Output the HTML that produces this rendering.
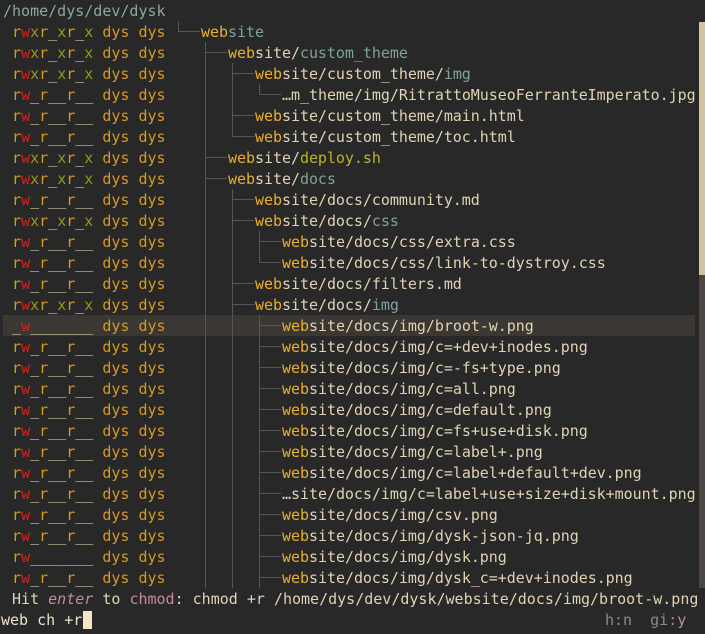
<!DOCTYPE html>
<html><head><meta charset="utf-8"><style>
html,body{margin:0;padding:0;background:#282828;width:705px;height:634px;overflow:hidden}
body{font-family:"DejaVu Sans Mono","Liberation Mono",monospace;font-size:15px;color:#e0d2b4;position:relative}
.row{position:absolute;left:0;height:21px;line-height:21px;white-space:pre;width:705px}
.t{position:absolute;left:3px;top:1px}
.nm{position:absolute;top:1px;letter-spacing:-0.04px}
.r{color:#d79921}.w{color:#cc241d}.x{color:#98971a}.u{color:#d6c9a8}
.o{color:#d79921}.m{color:#e8b030}.d{color:#7fa39b}.g{color:#b7b72a}
.sel{background:#3b3732}
.tr{position:absolute;top:0;width:27px;height:21px}
.tr.v::before,.tr.t::before,.tr.l::before{content:"";position:absolute;left:4px;width:1px;background:#55555c;top:0}
.tr.v::before,.tr.t::before{height:21px}
.tr.l::before{height:11px}
.tr.t::after,.tr.l::after{content:"";position:absolute;left:4px;top:10px;height:1px;width:22px;background:#55555c}
.pk{color:#c38aa0}.gr{color:#908a80}
</style></head><body>
<div class="row" style="top:0"><span class="t" style="color:#8fa6a0">/home/dys/dev/dysk</span></div>
<div id="rows"></div>
<div style="position:absolute;left:699px;top:22px;width:6px;height:253px;background:#d3c3a0"></div>
<div style="position:absolute;left:699px;top:275px;width:6px;height:313px;background:#4c4542"></div>
<div class="row" style="top:588px"><span class="t"> Hit <i class="pk">enter</i> to <span class="pk">chmod</span>: chmod +r /home/dys/dev/dysk/website/docs/img/broot-w.png</span></div>
<div class="row" style="top:609px"><span style="position:absolute;left:1px;top:1px;color:#ece2cc">web ch +r</span><span style="position:absolute;left:83px;top:2px;width:9px;height:18px;background:#f3e6c2"></span><span style="position:absolute;left:605px;top:1px" class="gr">h:n  gi:<span class="pk">y</span></span></div>
<script>
const P={a:['r','w','x','r','u','x','r','u','x'],f:['r','w','u','r','u','u','r','u','u'],s:['u','w','u','u','u','u','u','u','u'],p:['r','w','u','u','u','u','u','u','u']};
const rows=[
['a','l','<span class="m">web</span><span class="d">site</span>'],
['a','et','<span class="m">web</span>site/<span class="d">custom_theme</span>'],
['a','evt','<span class="m">web</span>site/custom_theme/<span class="d">img</span>'],
['f','evvl','…m_theme/img/RitrattoMuseoFerranteImperato.jpg'],
['f','evt','<span class="m">web</span>site/custom_theme/main.html'],
['f','evl','<span class="m">web</span>site/custom_theme/toc.html'],
['a','et','<span class="m">web</span>site/<span class="g">deploy.sh</span>'],
['a','et','<span class="m">web</span>site/<span class="d">docs</span>'],
['f','evt','<span class="m">web</span>site/docs/community.md'],
['a','evt','<span class="m">web</span>site/docs/<span class="d">css</span>'],
['f','evvt','<span class="m">web</span>site/docs/css/extra.css'],
['f','evvl','<span class="m">web</span>site/docs/css/link-to-dystroy.css'],
['f','evt','<span class="m">web</span>site/docs/filters.md'],
['a','evt','<span class="m">web</span>site/docs/<span class="d">img</span>'],
['s','evvt','<span class="m">web</span>site/docs/img/broot-w.png',1],
['f','evvt','<span class="m">web</span>site/docs/img/c=+dev+inodes.png'],
['f','evvt','<span class="m">web</span>site/docs/img/c=-fs+type.png'],
['f','evvt','<span class="m">web</span>site/docs/img/c=all.png'],
['f','evvt','<span class="m">web</span>site/docs/img/c=default.png'],
['f','evvt','<span class="m">web</span>site/docs/img/c=fs+use+disk.png'],
['f','evvt','<span class="m">web</span>site/docs/img/c=label+.png'],
['f','evvt','<span class="m">web</span>site/docs/img/c=label+default+dev.png'],
['f','evvt','…site/docs/img/c=label+use+size+disk+mount.png'],
['f','evvt','<span class="m">web</span>site/docs/img/csv.png'],
['f','evvt','<span class="m">web</span>site/docs/img/dysk-json-jq.png'],
['p','evvt','<span class="m">web</span>site/docs/img/dysk.png'],
['f','evvt','<span class="m">web</span>site/docs/img/dysk_c=+dev+inodes.png']];
let h='';
rows.forEach((r,i)=>{
 const y=21*(i+1);
 const perm=P[r[0]].map(c=>'<span class="'+c+'">'+(c==='r'?'r':c==='w'?'w':c==='x'?'x':'_')+'</span>').join('');
 let tr='';
 [...r[1]].forEach((c,k)=>{ if(c!=='e') tr+='<span class="tr '+c+'" style="left:'+(174+27*k)+'px"></span>';});
 const nx=3+9*(19+3*r[1].length);
 h+='<div class="row" style="top:'+y+'px">'+(r[3]?'<div class="sel" style="position:absolute;left:3px;top:0;width:692px;height:21px"></div>':'')+
 '<span class="t"> '+perm+' <span class="o">dys dys</span></span>'+tr+'<span class="nm" style="left:'+nx+'px">'+r[2]+'</span></div>';
});
document.getElementById('rows').innerHTML=h;
</script>
</body></html>
